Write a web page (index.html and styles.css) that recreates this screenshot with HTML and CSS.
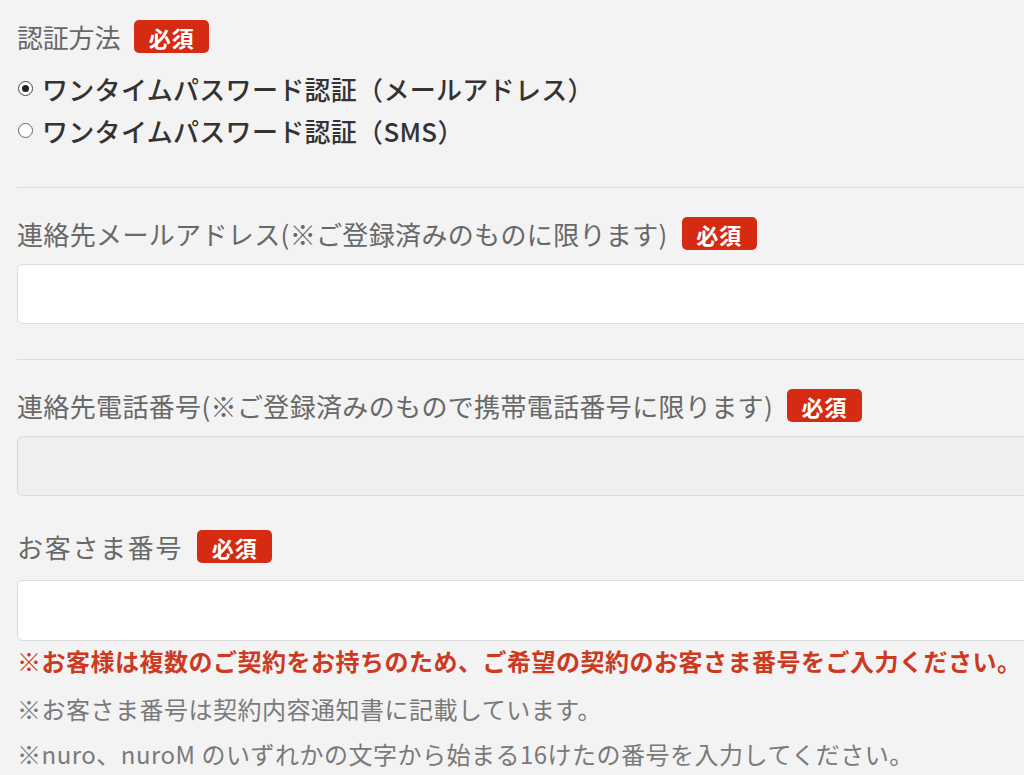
FILE: index.html
```html
<!DOCTYPE html>
<html lang="ja">
<head>
<meta charset="utf-8">
<title>認証</title>
<link rel="stylesheet" href="styles.css">
</head>
<body>
<div class="form">
  <section class="section">
    <div class="label-row">
      <span class="label label-tight">認証方法</span>
      <span class="badge">必須</span>
    </div>
    <div class="radios">
      <label class="radio-row"><input type="radio" name="auth" class="radio" checked><span>ワンタイムパスワード認証（メールアドレス）</span></label>
      <label class="radio-row"><input type="radio" name="auth" class="radio"><span>ワンタイムパスワード認証（SMS）</span></label>
    </div>
  </section>
  <hr class="divider">
  <section class="section">
    <div class="label-row">
      <span class="label">連絡先メールアドレス(※ご登録済みのものに限ります)</span>
      <span class="badge">必須</span>
    </div>
    <input type="text" class="field">
  </section>
  <hr class="divider divider-2">
  <section class="section">
    <div class="label-row">
      <span class="label">連絡先電話番号(※ご登録済みのもので携帯電話番号に限ります)</span>
      <span class="badge">必須</span>
    </div>
    <input type="text" class="field field-disabled">
  </section>
  <section class="section section-customer">
    <div class="label-row">
      <span class="label label-wide">お客さま番号</span>
      <span class="badge">必須</span>
    </div>
    <input type="text" class="field field-tall">
    <p class="note note-error">※お客様は複数のご契約をお持ちのため、ご希望の契約のお客さま番号をご入力ください。</p>
    <p class="note note-first">※お客さま番号は契約内容通知書に記載しています。</p>
    <p class="note">※nuro、nuroM のいずれかの文字から始まる16けたの番号を入力してください。</p>
  </section>
</div>
</body>
</html>
```
FILE: styles.css
```css
html, body {
  margin: 0;
  padding: 0;
  overflow: hidden;
}
body {
  background: #f3f3f3;
  font-family: "Noto Sans CJK JP", "Noto Sans", sans-serif;
  color: #666;
  width: 1024px;
  height: 775px;
}
.form {
  padding: 20px 0 0 17px;
  width: 1030px;
}
.section {
  display: flex;
  flex-direction: column;
}
.label-row {
  display: flex;
  align-items: center;
  gap: 14px;
  height: 33px;
}
.label {
  font-size: 26px;
  line-height: 33px;
  color: #686868;
  letter-spacing: 0.35px;
}
.label-tight {
  letter-spacing: -0.2px;
}
.label-wide {
  letter-spacing: 1.7px;
}
.badge {
  display: inline-flex;
  align-items: center;
  justify-content: center;
  width: 75px;
  height: 33px;
  border-radius: 5px;
  background: #d42b12;
  color: #fff;
  font-size: 22px;
  font-weight: 700;
  letter-spacing: 1px;
}
.radios {
  margin-top: 14px;
  display: flex;
  flex-direction: column;
}
.radio-row {
  display: flex;
  align-items: center;
  height: 42px;
  gap: 9px;
  font-size: 26px;
  font-weight: 500;
  color: #333;
  letter-spacing: 0.3px;
}
.radio {
  appearance: none;
  -webkit-appearance: none;
  margin: 0 0 0 1px;
  width: 15px;
  height: 15px;
  border: 1.5px solid #666;
  border-radius: 50%;
  background: #fff;
  box-sizing: border-box;
  display: grid;
  place-items: center;
}
.radio:checked {
  border-color: #444;
}
.radio:checked::after {
  content: "";
  width: 7px;
  height: 7px;
  border-radius: 50%;
  background: #222;
}
.divider {
  border: 0;
  border-top: 1px solid #dcdcdc;
  margin: 36px 0 29px 0;
}
.divider-2 {
  margin-top: 35px;
}
.field {
  margin: 14px 0 0 0;
  height: 60px;
  box-sizing: border-box;
  border: 1px solid #dadada;
  border-radius: 6px;
  background: #fff;
  width: 100%;
  font-size: 22px;
}
.field-disabled {
  background: #efefef;
}
.section-customer {
  margin-top: 34px;
}
.field-tall {
  height: 61px;
  margin-top: 17px;
}
.note {
  margin: 0;
  font-size: 24px;
  line-height: 45px;
  color: #7a7a7a;
  white-space: nowrap;
  letter-spacing: 0.5px;
}
.note-error {
  color: #cc3a22;
  font-weight: 700;
  line-height: 40px;
  letter-spacing: 0.5px;
}
.note-first {
  margin-top: 5px;
}
```
